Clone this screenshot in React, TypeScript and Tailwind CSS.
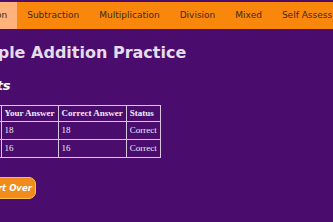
import React from 'react'

const tabs = ['Addition', 'Subtraction', 'Multiplication', 'Division', 'Mixed', 'Self Assessment']

const rows = [
  { q: '7 + 11', yours: '18', correct: '18', status: 'Correct' },
  { q: '9 + 7', yours: '16', correct: '16', status: 'Correct' },
]

export default function App() {
  return (
    <div className="w-[333px] h-[222px] overflow-hidden bg-[#4a0d6e] pt-[2px]">
      {/* nav */}
      <nav className="flex h-[27px] bg-[#f8870b] -ml-[40px] w-[420px] font-['DejaVu_Sans',sans-serif] text-[9px] text-[#3b2a1c]">
        {tabs.map((t, i) => (
          <a
            key={t}
            className={`flex items-center px-[10px] whitespace-nowrap ${i === 0 ? 'bg-[#ffb27c]' : ''}`}
          >
            {t}
          </a>
        ))}
      </nav>

      <div className="font-['DejaVu_Sans',sans-serif]">
        <h1 className="-ml-[36px] mt-[13px] text-[16px] leading-[22px] font-bold text-[#e4dcea] whitespace-nowrap">
          Simple Addition Practice
        </h1>
        <h2 className="-ml-[43px] mt-[14px] text-[13px] leading-[16px] font-bold italic text-white whitespace-nowrap">
          Results
        </h2>
      </div>

      <table className="-ml-[41px] mt-[11px] border-collapse border border-[#d6c6de] font-['Liberation_Serif',serif] text-[9px] leading-[11px] text-[#f2eaf4]">
        <thead>
          <tr>
            <th className="border border-[#d6c6de] px-[3px] py-[2px] text-left">Question</th>
            <th className="border border-[#d6c6de] px-[3px] py-[2px] text-left">Your Answer</th>
            <th className="border border-[#d6c6de] px-[3px] py-[2px] text-left">Correct Answer</th>
            <th className="border border-[#d6c6de] px-[3px] py-[2px] text-left">Status</th>
          </tr>
        </thead>
        <tbody>
          {rows.map((r) => (
            <tr key={r.q}>
              <td className="border border-[#d6c6de] px-[3px] py-[3px]">{r.q}</td>
              <td className="border border-[#d6c6de] px-[3px] py-[3px]">{r.yours}</td>
              <td className="border border-[#d6c6de] px-[3px] py-[3px]">{r.correct}</td>
              <td className="border border-[#d6c6de] px-[3px] py-[3px]">{r.status}</td>
            </tr>
          ))}
        </tbody>
      </table>

      <button className="block -ml-[22px] mt-[19px] h-[22px] px-[3px] rounded-[7px] bg-[#ef8c1c] border border-[#f7c24a] font-['DejaVu_Sans',sans-serif] text-[8.5px] font-bold italic text-white">
        Start Over
      </button>
    </div>
  )
}
